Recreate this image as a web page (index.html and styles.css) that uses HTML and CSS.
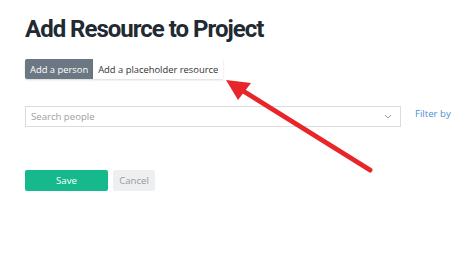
FILE: index.html
```html
<!DOCTYPE html>
<html lang="en">
<head>
    <meta charset="UTF-8">
    <title>Add Resource to Project</title>
    <link rel="stylesheet" href="styles.css">
</head>
<body>
    <h1 class="title">Add Resource to Project</h1>

    <div class="toggle">
        <button class="toggle-btn active">Add a person</button>
        <button class="toggle-btn">Add a placeholder resource</button>
    </div>

    <div class="search-row">
        <div class="search">
            <span class="placeholder">Search people</span>
            <svg class="chevron" width="8" height="5" viewBox="0 0 8 5"><path d="M1 1l3 3 3-3" fill="none" stroke="#999" stroke-width="1"/></svg>
        </div>
        <a class="filter" href="#">Filter by type</a>
    </div>

    <div class="actions">
        <button class="btn save">Save</button>
        <button class="btn cancel">Cancel</button>
    </div>

    <svg class="arrow" width="452" height="276" viewBox="0 0 452 276">
        <line x1="370" y1="170" x2="240" y2="89" stroke="#e8262a" stroke-width="5" stroke-linecap="round"/>
        <polygon points="226,80 251,83 238,100" fill="#e8262a"/>
    </svg>
</body>
</html>
```

FILE: styles.css
```css
body {
    margin: 0;
    padding: 14px 25px 0;
    font-family: "Open Sans", sans-serif;
    background: #fff;
    width: 452px;
    height: 276px;
    box-sizing: border-box;
    overflow: hidden;
}

.title {
    font-family: Roboto, sans-serif;
    font-weight: 700;
    font-size: 24px;
    letter-spacing: -1px;
    color: #1f2a33;
    margin: 0;
    line-height: 30px;
}

.toggle {
    display: flex;
    margin-top: 15px;
}

.toggle-btn {
    font-family: "Open Sans", sans-serif;
    font-size: 9.4px;
    height: 20px;
    padding: 0 5px;
    border: none;
    background: #fff;
    color: #333;
    box-shadow: 0 1px 2px rgba(0, 0, 0, 0.15);
}

.toggle-btn.active {
    background: #6b7782;
    color: #fff;
    border-radius: 2px 0 0 2px;
}

.search-row {
    display: flex;
    align-items: center;
    margin-top: 27px;
}

.search {
    flex-shrink: 0;
    width: 376px;
    height: 21px;
    border: 1px solid #dcdcdc;
    box-sizing: border-box;
    display: flex;
    align-items: center;
    justify-content: space-between;
    padding: 0 8px 0 5px;
}

.placeholder {
    font-size: 9.6px;
    color: #a0a0a0;
}

.filter {
    margin-left: 14px;
    font-size: 9.6px;
    color: #4a8fd8;
    text-decoration: none;
    white-space: nowrap;
    margin-top: -6px;
}

.actions {
    display: flex;
    gap: 5px;
    margin-top: 43px;
}

.btn {
    font-family: "Open Sans", sans-serif;
    font-size: 9.6px;
    height: 21px;
    border: none;
    border-radius: 2px;
}

.save {
    width: 83px;
    background: #16b98b;
    color: #fff;
}

.cancel {
    width: 42px;
    background: #eeeff0;
    color: #999;
}

.arrow {
    position: absolute;
    left: 0;
    top: 0;
    pointer-events: none;
}
```
